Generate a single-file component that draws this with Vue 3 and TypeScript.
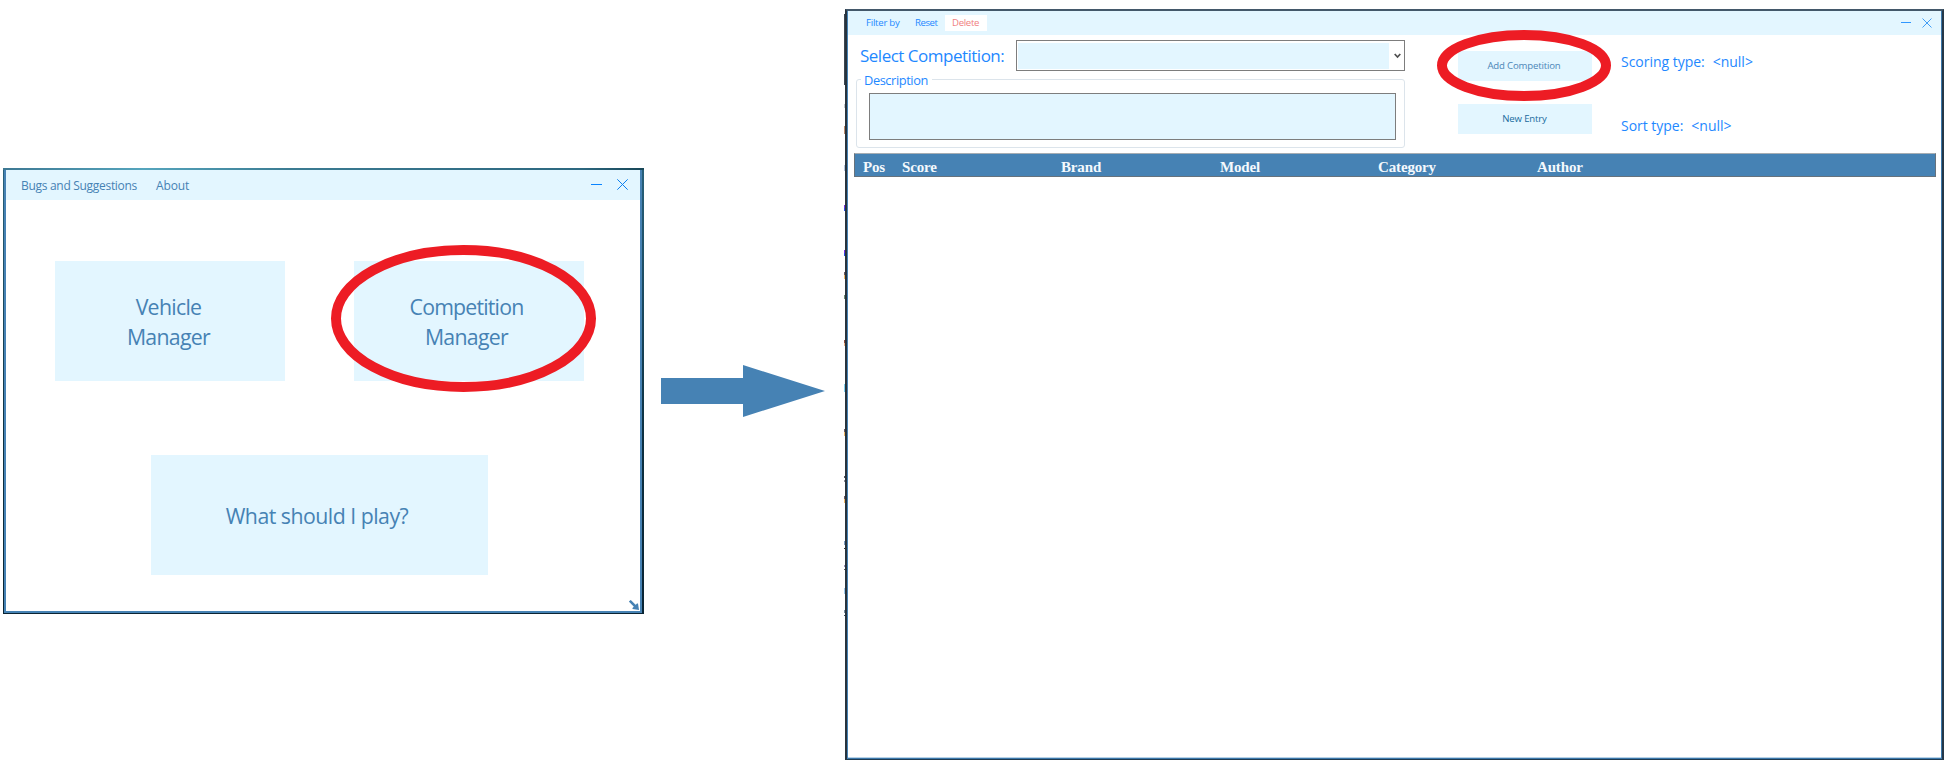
<script setup lang="ts">
interface Column {
  label: string
  width: number
}

const columns: Column[] = [
  { label: 'Pos', width: 39 },
  { label: 'Score', width: 159 },
  { label: 'Brand', width: 159 },
  { label: 'Model', width: 158 },
  { label: 'Category', width: 159 },
  { label: 'Author', width: 159 },
]

interface Speck {
  y: number
  h: number
  color: string
}

const specks: Speck[] = [
  { y: 14, h: 71, color: '#3c4650' },
  { y: 104, h: 4, color: '#c3c8cd' },
  { y: 126, h: 8, color: '#b98a6c' },
  { y: 165, h: 6, color: '#b4c4dc' },
  { y: 205, h: 3, color: '#7a2ee0' },
  { y: 208, h: 3, color: '#2a50e8' },
  { y: 250, h: 3, color: '#7a2ee0' },
  { y: 253, h: 3, color: '#2a50e8' },
  { y: 272, h: 3, color: '#6b5a60' },
  { y: 275, h: 4, color: '#f0b765' },
  { y: 295, h: 4, color: '#6f8c72' },
  { y: 340, h: 3, color: '#8c4b3c' },
  { y: 343, h: 3, color: '#f0b080' },
  { y: 384, h: 8, color: '#7fd0ee' },
  { y: 429, h: 3, color: '#6b5a60' },
  { y: 432, h: 4, color: '#f0b765' },
  { y: 476, h: 2, color: '#55555f' },
  { y: 480, h: 2, color: '#8c8c96' },
  { y: 496, h: 3, color: '#6b5a60' },
  { y: 499, h: 4, color: '#f0b765' },
  { y: 541, h: 4, color: '#7d9cc0' },
  { y: 548, h: 1, color: '#333' },
  { y: 565, h: 2, color: '#9a90b8' },
  { y: 569, h: 1, color: '#555' },
  { y: 588, h: 6, color: '#9cc8e8' },
  { y: 610, h: 3, color: '#7a8c9c' },
  { y: 615, h: 1, color: '#3c5064' },
]
</script>

<template>
  <main class="stage">
    <section class="launcher">
      <header class="launcher-bar">
        <nav class="launcher-menu">
          <span>Bugs and Suggestions</span>
          <span class="about">About</span>
        </nav>
        <svg class="launcher-controls" width="38" height="12" viewBox="0 0 38 12">
          <path d="M0 5.5H11" stroke="#0a84ff" />
          <path d="M26.3 .3L36.7 10.7M36.7 .3L26.3 10.7" stroke="#0a7ff0" />
        </svg>
      </header>
      <div class="launcher-body">
        <div class="tile-row">
          <button class="tile vehicle">Vehicle<br />Manager</button>
          <div class="marked">
            <button class="tile competition"><span>Competition</span><br />Manager</button>
            <svg class="ring ring-tile" width="265" height="147" viewBox="0 0 265 147">
              <ellipse cx="132.5" cy="73.5" rx="127.5" ry="68.5" />
            </svg>
          </div>
        </div>
        <button class="tile play">What should I play?</button>
        <svg class="grip" width="10" height="10" viewBox="0 0 10 10">
          <path d="M.8 .8L7 7" stroke="#4682b4" stroke-width="2.5" />
          <path d="M9 3.5L10 10L3.5 9V8L8 3.5Z" fill="#4682b4" />
        </svg>
      </div>
    </section>

    <svg class="arrow" width="164" height="52" viewBox="0 0 164 52">
      <path d="M0 13H82V0L164 26L82 52V39H0Z" fill="#4682b4" />
    </svg>

    <section class="manager">
      <svg class="specks" width="1" height="751" viewBox="0 9 1 751">
        <rect v-for="s in specks" :key="s.y" x="0" :y="s.y" width="1" :height="s.h" :fill="s.color" />
      </svg>
      <header class="manager-bar">
        <nav class="manager-menu">
          <span class="filter">Filter by</span>
          <span class="reset">Reset</span>
          <span class="delete">Delete</span>
        </nav>
        <svg class="manager-controls" width="32" height="10" viewBox="0 0 32 10">
          <path d="M0 4.5H10" stroke="#2f97ff" />
          <path d="M21.5 .5L30.5 9.5M30.5 .5L21.5 9.5" stroke="#2f93f5" stroke-width=".9" />
        </svg>
      </header>

      <div class="form">
        <div class="fields">
          <div class="select-row">
            <label>Select Competition:</label>
            <div class="combo">
              <div class="combo-value"></div>
              <svg width="7" height="6" viewBox="0 0 7 6">
                <path d="M.7 1L3.5 4L6.3 1" fill="none" stroke="#505050" stroke-width="1.7" />
              </svg>
            </div>
          </div>
          <div class="group">
            <span class="legend">Description</span>
            <div class="textarea"></div>
          </div>
        </div>
        <div class="actions">
          <div class="marked">
            <button class="action add">Add Competition</button>
            <svg class="ring ring-action" width="174" height="71" viewBox="0 0 174 71">
              <ellipse cx="87" cy="35.5" rx="82" ry="30.5" />
            </svg>
          </div>
          <button class="action entry">New Entry</button>
        </div>
        <div class="info">
          <p><span>Scoring type:</span><span>&lt;null&gt;</span></p>
          <p><span>Sort type:</span><span>&lt;null&gt;</span></p>
        </div>
      </div>

      <div class="table-head">
        <span v-for="c in columns" :key="c.label" :style="{ width: c.width + 'px' }">{{ c.label }}</span>
      </div>
    </section>
  </main>
</template>

<style>
body {
  margin: 0;
  background: #fff;
}
</style>

<style scoped>
* {
  box-sizing: border-box;
}

.stage {
  display: flex;
  align-items: flex-start;
  width: 1949px;
  height: 781px;
  padding-left: 3px;
  overflow: hidden;
  background: #fff;
  font-family: 'Open Sans', 'Noto Sans', sans-serif;
}

button {
  border: 0;
  padding: 0;
  font-family: inherit;
  background: #e3f6ff;
}

.marked {
  position: relative;
}

.ring {
  position: absolute;
  fill: none;
  stroke: #ed1c24;
  stroke-width: 10;
  pointer-events: none;
}

.launcher {
  flex: none;
  width: 641px;
  height: 446px;
  margin-top: 168px;
  padding: 2px 2px 1px 1px;
  background:
    linear-gradient(90deg, #3d7893, #55a5bd 22%, #3b7b92 45%, #2d6880 90%, #174657) top / 100% 2px no-repeat,
    linear-gradient(#28607a, #0d3040 60%, #0a2433);
}

.launcher-bar {
  display: flex;
  justify-content: space-between;
  align-items: center;
  height: 30px;
  padding: 0 11px 0 15px;
  background: #e3f6ff;
  border-left: 2px solid #4682b4;
  border-right: 2px solid #4682b4;
}

.launcher-menu {
  display: flex;
  padding-top: 2px;
  font-size: 12px;
  line-height: 30px;
  letter-spacing: -0.3px;
  color: #4682b4;
}

.about {
  margin-left: 19px;
  letter-spacing: -0.1px;
}

.launcher-controls {
  margin-top: -1px;
}

.launcher-body {
  position: relative;
  height: 413px;
  padding: 61px 0 0 49px;
  background: #fff;
  border: 2px solid #4682b4;
  border-top: 0;
}

.tile-row {
  display: flex;
  gap: 69px;
}

.tile {
  display: block;
  width: 230px;
  height: 120px;
  padding: 2px 3px 0 0;
  font-size: 21.3px;
  line-height: 30px;
  letter-spacing: -0.7px;
  color: #4682b4;
}

.competition {
  padding-right: 5px;
}

.competition span {
  letter-spacing: -0.8px;
}

.play {
  width: 337px;
  margin: 74px 0 0 96px;
  padding-right: 5px;
  letter-spacing: -0.51px;
}

.ring-tile {
  left: -23px;
  top: -16px;
}

.grip {
  position: absolute;
  right: 1px;
  bottom: 1px;
}

.arrow {
  flex: none;
  margin: 365px 20px 0 17px;
}

.manager {
  position: relative;
  flex: none;
  width: 1099px;
  height: 751px;
  margin-top: 9px;
  background: #fff;
  border-style: solid;
  border-width: 2px 2px 1px 2px;
  border-color: #43586a #263848 #203b50 #27333d;
  box-shadow:
    inset 1px 0 #4682b4,
    inset -1px 0 #3c78ab,
    inset 0 -1px #3c78ab,
    inset 0 -2px #b9d3e7;
}

.specks {
  position: absolute;
  left: -3px;
  top: -2px;
}

.manager-bar {
  display: flex;
  justify-content: space-between;
  align-items: center;
  height: 24px;
  margin: 0 1px;
  padding: 0 8px 0 18px;
  background: #e3f6ff;
}

.manager-menu {
  display: flex;
  font-size: 9.6px;
  line-height: 16px;
  letter-spacing: -0.24px;
  color: #1e88ff;
}

.filter {
  width: 49px;
}

.reset {
  width: 30px;
  letter-spacing: -0.45px;
}

.delete {
  width: 42px;
  padding-left: 7px;
  background: #fff;
  color: #f08080;
  letter-spacing: -0.3px;
}

.manager-controls {
  margin-top: -1px;
}

.form {
  display: flex;
  height: 118px;
  padding: 5px 0 0 9px;
}

.fields {
  width: 549px;
}

.select-row {
  display: flex;
  justify-content: space-between;
  height: 31px;
  padding-left: 4px;
}

.select-row label {
  font-size: 17px;
  line-height: 31px;
  letter-spacing: -0.5px;
  white-space: nowrap;
  color: #1e88ff;
}

.combo {
  display: flex;
  align-items: center;
  width: 389px;
  height: 31px;
  padding-left: 1px;
  border: 1px solid #7d7d7d;
}

.combo-value {
  width: 371px;
  height: 26px;
  margin-right: 5px;
  background: #e3f6ff;
}

.group {
  height: 69px;
  margin-top: 8px;
  padding: 13px 8px 0 12px;
  position: relative;
  border: 1px solid #dce4eb;
  border-radius: 3px;
}

.legend {
  position: absolute;
  left: 4px;
  top: -9px;
  padding: 0 4px 0 3px;
  font-size: 12.8px;
  line-height: 18px;
  letter-spacing: -0.4px;
  background: #fff;
  color: #1e88ff;
}

.textarea {
  height: 47px;
  background: #e3f6ff;
  border: 1px solid #7d7d7d;
}

.actions {
  width: 134px;
  margin: 11px 0 0 53px;
}

.action {
  display: block;
  width: 134px;
  height: 30px;
  padding-bottom: 1px;
  font-size: 9.6px;
  line-height: 29px;
  letter-spacing: -0.17px;
}

.add {
  padding-right: 2px;
  color: #4c86b8;
}

.entry {
  margin-top: 23px;
  padding-right: 1px;
  color: #196b9e;
}

.ring-action {
  left: -21px;
  top: -21px;
}

.info {
  margin-left: 29px;
  padding-top: 12px;
  font-size: 14px;
  line-height: 20px;
  letter-spacing: -0.02px;
  color: #1e88ff;
}

.info p {
  display: flex;
  gap: 8px;
  margin: 0 0 44px;
}

.table-head {
  display: flex;
  width: 1082px;
  height: 24px;
  margin-left: 7px;
  padding-left: 8px;
  background: #4682b4;
  border: 1px solid #66727d;
  border-top-color: #a6adb3;
  font-family: 'Liberation Serif', serif;
  font-size: 15px;
  font-weight: 700;
  line-height: 26px;
  letter-spacing: -0.15px;
  color: #f4f9fd;
}
</style>
